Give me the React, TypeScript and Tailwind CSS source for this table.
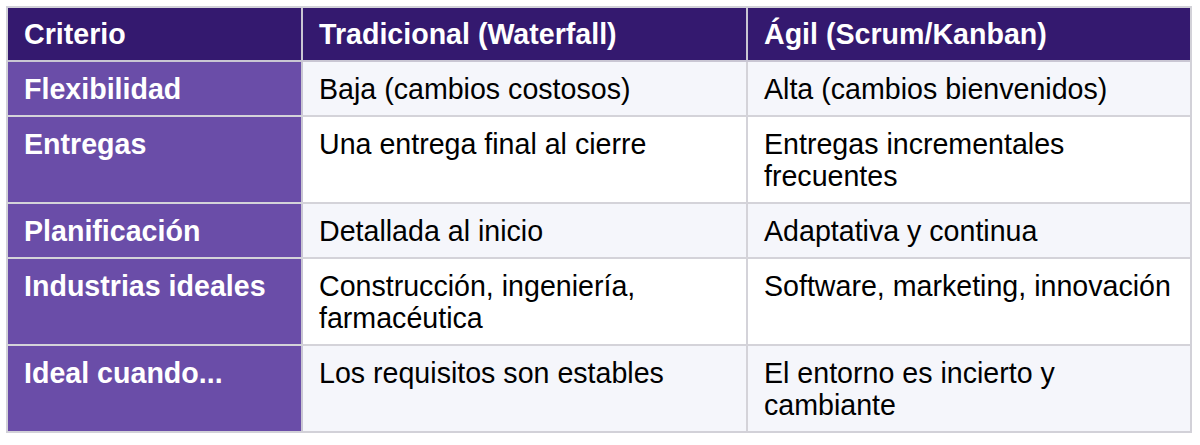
const rows = [
  {
    criterio: "Flexibilidad",
    tradicional: "Baja (cambios costosos)",
    agil: "Alta (cambios bienvenidos)",
  },
  {
    criterio: "Entregas",
    tradicional: "Una entrega final al cierre",
    agil: "Entregas incrementales frecuentes",
  },
  {
    criterio: "Planificación",
    tradicional: "Detallada al inicio",
    agil: "Adaptativa y continua",
  },
  {
    criterio: "Industrias ideales",
    tradicional: "Construcción, ingeniería, farmacéutica",
    agil: "Software, marketing, innovación",
  },
  {
    criterio: "Ideal cuando...",
    tradicional: "Los requisitos son estables",
    agil: "El entorno es incierto y cambiante",
  },
]

export default function App() {
  return (
    <div className="w-[1200px] h-[445px] bg-white pl-[6px] pt-[6px] font-['Liberation_Sans',Arial,sans-serif] text-[28.6px] leading-[32px]">
      <div className="w-[1186px] border-2 border-[#d2d1d8]">
        {/* header */}
        <div className="grid grid-cols-[295px_445px_1fr] bg-[#34196f] text-white font-bold border-b-2 border-[#c9c6d3]">
          <div className="px-4 pt-[10px] pb-[10px] border-r-2 border-[#c9c6d3]">Criterio</div>
          <div className="px-4 pt-[10px] pb-[10px] border-r-2 border-[#c9c6d3]">Tradicional (Waterfall)</div>
          <div className="px-4 pt-[10px] pb-[10px]">Ágil (Scrum/Kanban)</div>
        </div>

        {rows.map((r, i) => (
          <div
            key={r.criterio}
            className={
              "grid grid-cols-[295px_445px_1fr] text-black " +
              (i < rows.length - 1 ? "border-b-2 border-[#d4d3d9] " : "") +
              (i % 2 === 0 ? "bg-[#f5f6fb]" : "bg-white")
            }
          >
            <div className="px-4 pt-[11px] pb-[10px] bg-[#6a4da8] text-white font-bold border-r-2 border-[#c9c6d3]">
              {r.criterio}
            </div>
            <div className="px-4 pt-[11px] pb-[10px] border-r-2 border-[#d4d3d9]">{r.tradicional}</div>
            <div className="px-4 pt-[11px] pb-[10px]">{r.agil}</div>
          </div>
        ))}
      </div>
    </div>
  )
}
